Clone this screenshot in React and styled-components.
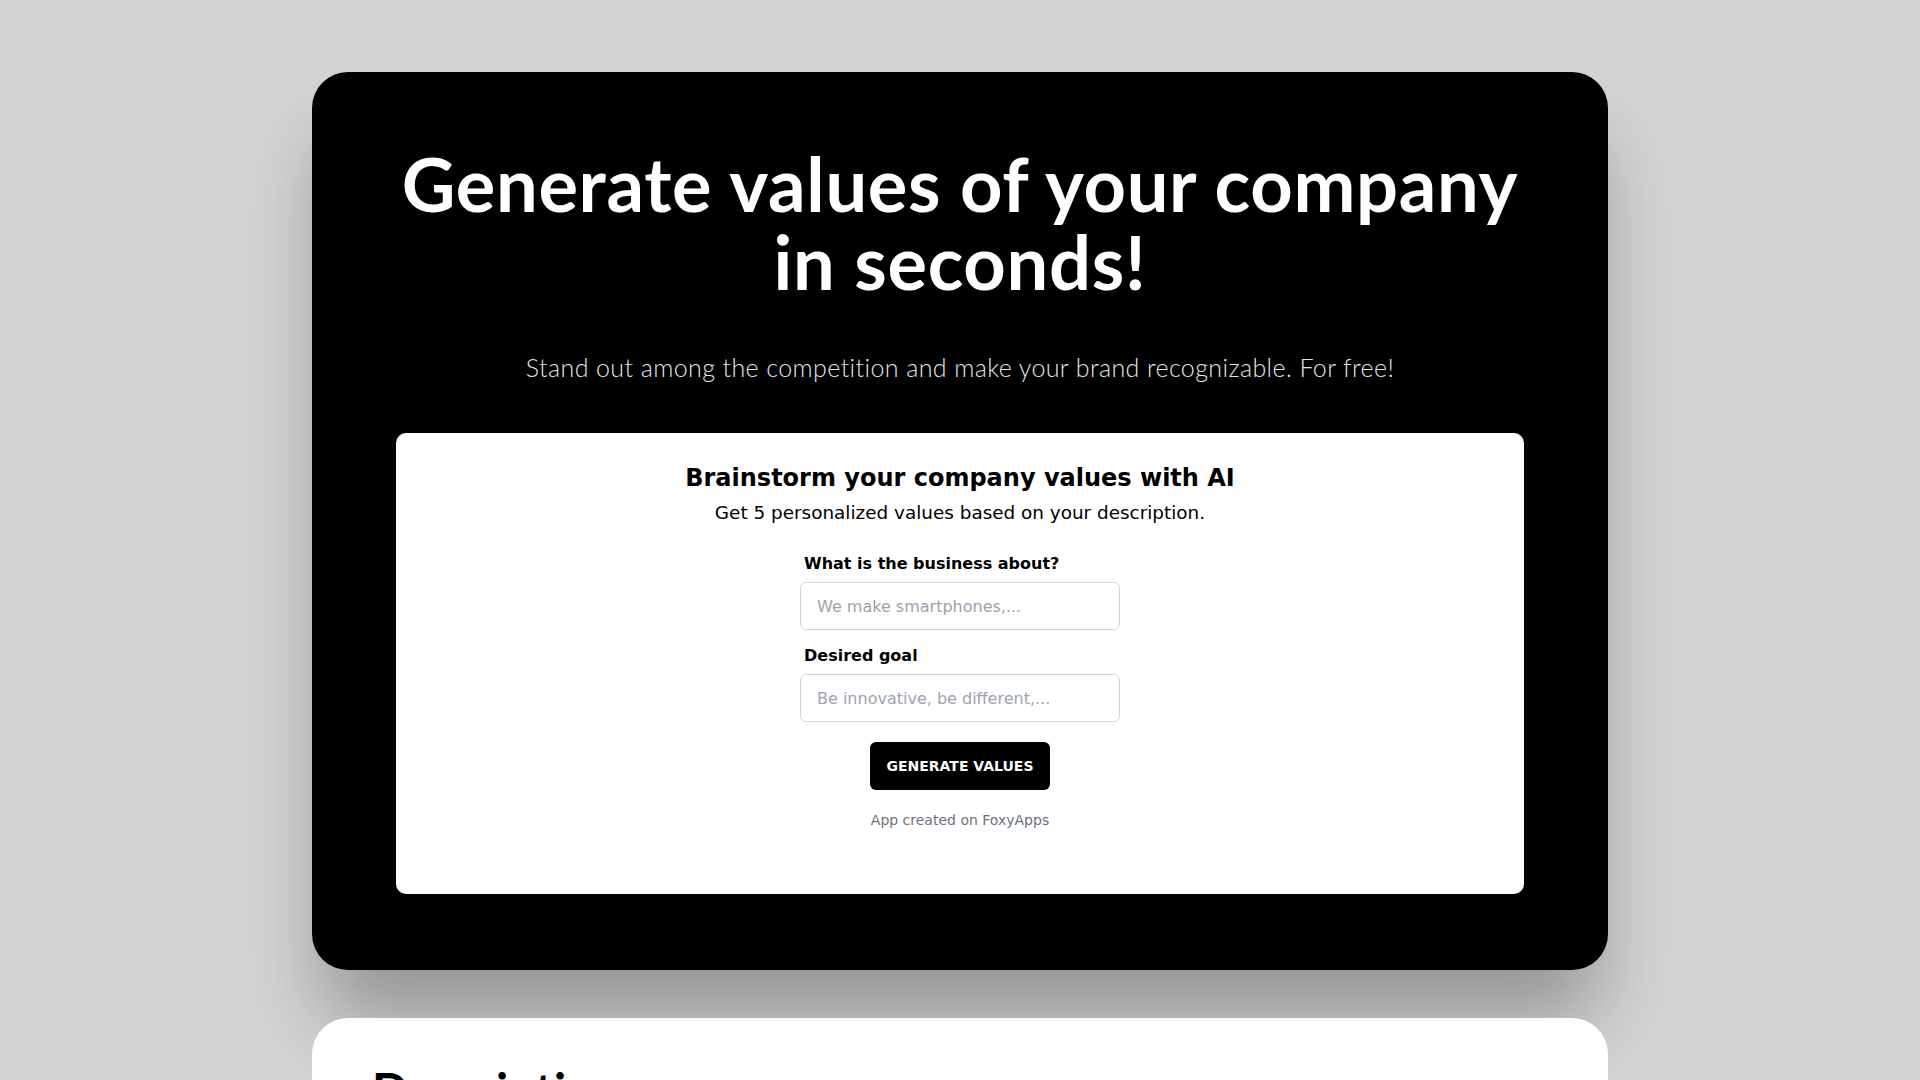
import styled, { createGlobalStyle } from "styled-components";

const GlobalStyle = createGlobalStyle`
  * {
    box-sizing: border-box;
  }
  body {
    margin: 0;
    background: #d4d4d4;
    font-family: "DejaVu Sans", sans-serif;
  }
`;

export default function App() {
  return (
    <>
      <GlobalStyle />
      <Page>
        <Hero>
          <Title>
            Generate values of your company
            <br />
            in seconds!
          </Title>
          <Subtitle>
            Stand out among the competition and make your brand recognizable. For free!
          </Subtitle>

          <ToolCard>
            <ToolTitle>Brainstorm your company values with AI</ToolTitle>
            <ToolText>Get 5 personalized values based on your description.</ToolText>

            <Form onSubmit={(e) => e.preventDefault()}>
              <Field>
                <Label htmlFor="about">What is the business about?</Label>
                <Input id="about" type="text" placeholder="We make smartphones,..." />
              </Field>
              <Field>
                <Label htmlFor="goal">Desired goal</Label>
                <Input id="goal" type="text" placeholder="Be innovative, be different,..." />
              </Field>
              <Button type="submit">Generate values</Button>
              <Credit>App created on FoxyApps</Credit>
            </Form>
          </ToolCard>
        </Hero>

        <Section>
          <SectionTitle>Description</SectionTitle>
        </Section>
      </Page>
    </>
  );
}

const Page = styled.main`
  width: 1296px;
  margin: 72px auto 0;
  display: flex;
  flex-direction: column;
  gap: 48px;
  padding-bottom: 80px;
`;

const Hero = styled.section`
  background: #000;
  border-radius: 36px;
  box-shadow: 0 60px 80px -10px rgba(0, 0, 0, 0.3);
  padding: 73px 84px 76px;
  display: flex;
  flex-direction: column;
  align-items: center;
  text-align: center;
`;

const Title = styled.h1`
  margin: 0;
  font-family: "Lato", "Liberation Sans", sans-serif;
  font-weight: 700;
  font-size: 74px;
  line-height: 78px;
  letter-spacing: 0.7px;
  color: #fff;
`;

const Subtitle = styled.p`
  margin: 50px 0 50px;
  font-family: "Lato", "Liberation Sans", sans-serif;
  font-weight: 300;
  font-size: 25px;
  line-height: 32px;
  letter-spacing: 0.4px;
  color: #e5e5e5;
`;

const ToolCard = styled.div`
  width: 100%;
  background: #fff;
  border-radius: 10px;
  padding: 29px 24px 64px;
  display: flex;
  flex-direction: column;
  align-items: center;
  color: #000;
`;

const ToolTitle = styled.h2`
  margin: 0;
  font-size: 24px;
  line-height: 32px;
  font-weight: 700;
`;

const ToolText = styled.p`
  margin: 5px 0 0;
  font-size: 18.4px;
  line-height: 28px;
`;

const Form = styled.form`
  width: 320px;
  margin-top: 25px;
  display: flex;
  flex-direction: column;
  align-items: center;
`;

const Field = styled.div`
  width: 100%;
  display: flex;
  flex-direction: column;
  gap: 6px;
  margin-bottom: 14px;
  text-align: left;

  &:last-of-type {
    margin-bottom: 20px;
  }
`;

const Label = styled.label`
  padding-left: 4px;
  font-size: 16px;
  line-height: 24px;
  font-weight: 700;
`;

const Input = styled.input`
  width: 100%;
  height: 48px;
  padding: 0 16px;
  border: 1px solid #d1d5db;
  border-radius: 6px;
  font-family: "DejaVu Sans", sans-serif;
  font-size: 16px;
  color: #111827;
  background: #fff;
  outline: none;

  &::placeholder {
    color: #9ca3af;
  }
`;

const Button = styled.button`
  height: 48px;
  padding: 0 16px;
  border: none;
  border-radius: 6px;
  background: #000;
  color: #fff;
  font-family: "DejaVu Sans", sans-serif;
  font-size: 14px;
  font-weight: 700;
  text-transform: uppercase;
  cursor: pointer;
`;

const Credit = styled.p`
  margin: 20px 0 0;
  font-size: 14px;
  line-height: 20px;
  color: #6b7280;
`;

const Section = styled.section`
  background: #fff;
  border-radius: 36px;
  padding: 44px 60px 80px;
`;

const SectionTitle = styled.h2`
  margin: 0;
  font-family: "Lato", "Liberation Sans", sans-serif;
  font-weight: 700;
  font-size: 48px;
  line-height: 56px;
  color: #000;
`;
